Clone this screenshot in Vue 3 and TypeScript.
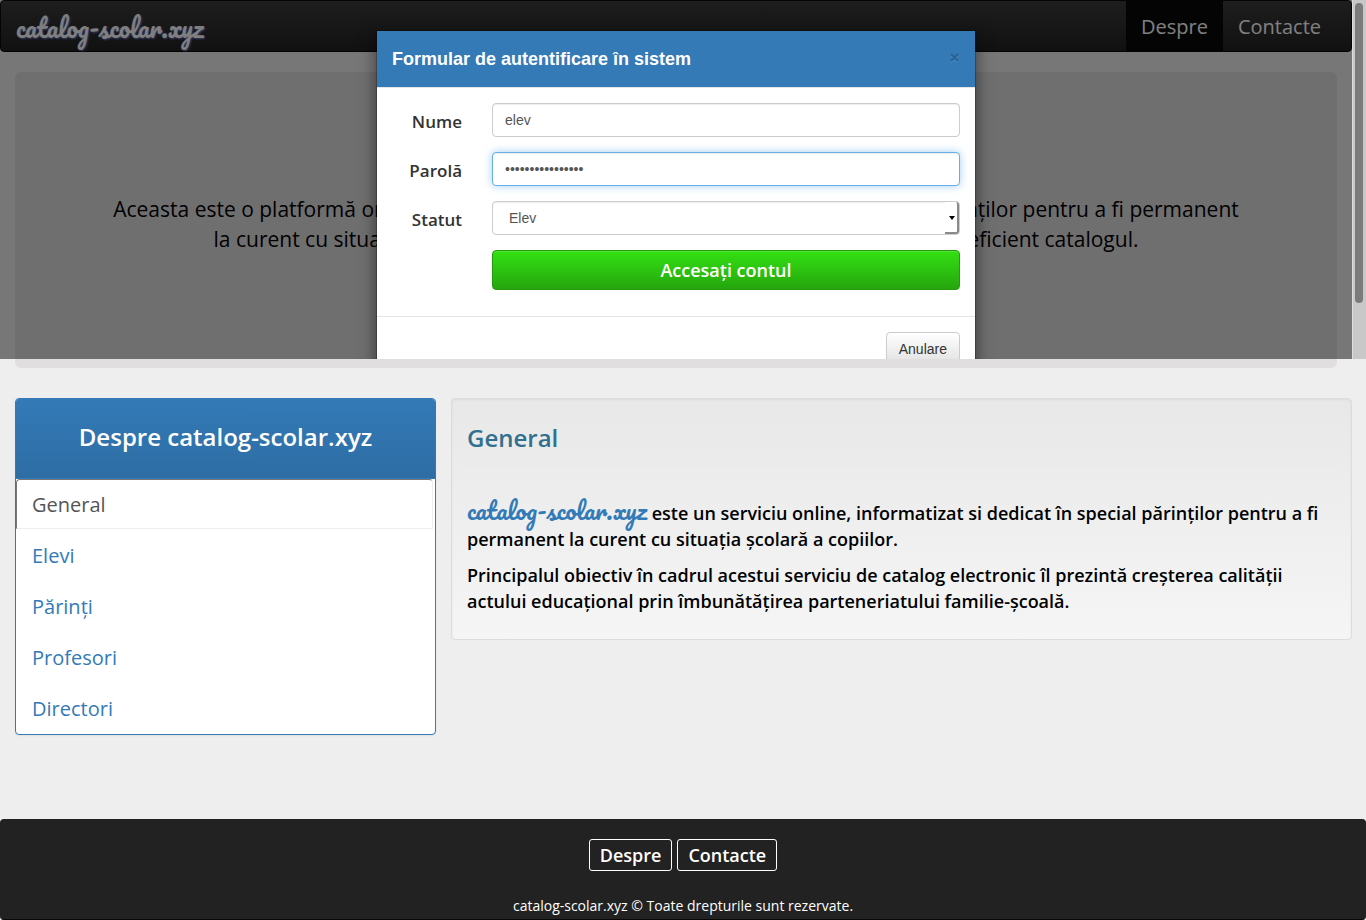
<script setup lang="ts">
import { ref } from 'vue'

interface Topic {
  label: string
  active: boolean
}

const username = ref('elev')
const password = ref('parolaelevului16')
const role = ref('Elev')
const topics: Topic[] = [
  { label: 'General', active: true },
  { label: 'Elevi', active: false },
  { label: 'Părinți', active: false },
  { label: 'Profesori', active: false },
  { label: 'Directori', active: false },
]
</script>

<template>
  <div class="page">
    <div class="top">
      <header class="navbar">
        <a class="brand script" href="#">catalog-scolar.xyz</a>
        <nav class="nav">
          <a class="nav-link current" href="#despre">Despre</a>
          <a class="nav-link" href="#contacte">Contacte</a>
        </nav>
      </header>
      <section class="hero">
        <p>
          Aceasta este o platformă online care vă oferă posibilitatea profesorilor, elevilor și a părinților pentru a fi permanent<br />
          la curent cu situația școlară a elevilor, iar profesorilor de a gestiona comod și eficient catalogul.
        </p>
      </section>
    </div>

    <main class="content">
      <aside class="panel">
        <h3 class="panel-title">Despre catalog-scolar.xyz</h3>
        <nav class="topics">
          <a v-for="t in topics" :key="t.label" href="#" class="topic" :class="{ active: t.active }">{{ t.label }}</a>
        </nav>
      </aside>
      <article class="well">
        <h3 class="well-title">General</h3>
        <hr />
        <p class="lead"><span class="script">catalog-scolar.xyz</span> este un serviciu online, informatizat si dedicat în special părinților pentru a fi permanent la curent cu situația școlară a copiilor.</p>
        <p>Principalul obiectiv în cadrul acestui serviciu de catalog electronic îl prezintă creșterea calității actului educațional prin îmbunătățirea parteneriatului familie-școală.</p>
      </article>
    </main>

    <footer class="footer">
      <div class="footer-links">
        <a href="#despre">Despre</a>
        <a href="#contacte">Contacte</a>
      </div>
      <p>catalog-scolar.xyz © Toate drepturile sunt rezervate.</p>
    </footer>

    <div class="overlay">
      <div class="backdrop">
        <div class="modal" role="dialog" aria-labelledby="login-title">
          <div class="modal-header">
            <h4 id="login-title">Formular de autentificare în sistem</h4>
            <button type="button" class="close" aria-label="Închide">
              <svg width="11" height="11" viewBox="0 0 11 11" aria-hidden="true">
                <path class="glow" d="M2 3l7 7M9 3l-7 7" />
                <path class="cross" d="M2 2l7 7M9 2l-7 7" />
              </svg>
            </button>
          </div>
          <form class="modal-body" @submit.prevent>
            <label for="nume">Nume</label>
            <input id="nume" v-model="username" class="field" type="text" />
            <label for="parola">Parolă</label>
            <input id="parola" v-model="password" class="field focused" type="password" />
            <label for="statut">Statut</label>
            <div class="select-wrap">
              <select id="statut" v-model="role" class="field">
                <option>Elev</option>
                <option>Părinte</option>
                <option>Profesor</option>
                <option>Director</option>
              </select>
              <span class="select-arrow">
                <svg width="6" height="4" viewBox="0 0 6 4" aria-hidden="true"><path d="M0 0h6L3 4z" /></svg>
              </span>
            </div>
            <button type="submit" class="submit">Accesați contul</button>
          </form>
          <div class="modal-footer">
            <button type="button" class="cancel">Anulare</button>
          </div>
        </div>
      </div>
      <div class="scrollbar"><div class="thumb"></div></div>
    </div>
  </div>
</template>

<style>
body {
  background: #eee;
}
</style>

<style scoped>
* {
  box-sizing: border-box;
}
.page {
  position: relative;
  min-height: 100vh;
  display: flex;
  flex-direction: column;
  font-family: "Open Sans", "Noto Sans", sans-serif;
  color: #000;
}
h3, h4, p {
  margin: 0;
}
a {
  text-decoration: none;
}
.script {
  font-family: Pacifico, cursive;
}
.top {
  padding-right: 14px;
}
.navbar {
  display: flex;
  justify-content: space-between;
  height: 52px;
  padding: 0 15px;
  border: 1px solid #080808;
  border-radius: 4px;
  background: linear-gradient(#3c3c3c, #222);
}
.brand {
  font-size: 25px;
  line-height: 52px;
  color: #fff;
  text-shadow: 1px 1px 2px #6c78c8;
}
.nav {
  display: flex;
}
.nav-link {
  height: 50px;
  padding: 0 15px;
  font-size: 20px;
  line-height: 52px;
  color: #fff;
}
.nav-link.current {
  background: #080808;
}
.hero {
  margin: 20px 15px 30px;
  height: 296px;
  padding: 122px 15px 0;
  border-radius: 6px;
  background: #e1dedf;
  text-align: center;
  font-size: 21px;
  line-height: 30px;
}
.content {
  display: grid;
  grid-template-columns: 421fr 901fr;
  align-items: start;
  gap: 15px;
  padding: 0 14px 0 15px;
}
.panel {
  border: 1px solid #337ab7;
  border-radius: 4px;
  background: #fff;
  box-shadow: 0 1px 2px rgba(0, 0, 0, 0.05);
  overflow: hidden;
}
.panel-title {
  height: 80px;
  background: linear-gradient(#337ab7, #2e6da4);
  border-bottom: 1px solid #337ab7;
  color: #fff;
  font-size: 24px;
  font-weight: 600;
  line-height: 76px;
  text-align: center;
}
.topics {
  display: flex;
  flex-direction: column;
  gap: 2px;
  padding-right: 2px;
}
.topic {
  height: 49px;
  padding: 0 16px;
  font-size: 20px;
  line-height: 51px;
  color: #337ab7;
}
.topic:last-child {
  height: 51px;
}
.topic.active {
  height: 50px;
  margin-bottom: -1px;
  padding: 0 15px;
  border: 1px solid #eee;
  border-top-color: #777;
  border-left-color: #777;
  border-radius: 4px 4px 0 0;
  line-height: 50px;
  color: #555;
}
.well {
  padding: 15px;
  border: 1px solid #dcdcdc;
  border-radius: 4px;
  background: linear-gradient(#e8e8e8, #f5f5f5);
  box-shadow: inset 0 1px 3px rgba(0, 0, 0, 0.05);
}
.well-title {
  padding-top: 6px;
  color: #31708f;
  font-size: 24px;
  font-weight: 600;
  line-height: 36px;
}
.well hr {
  margin: 14px 0 20px;
  border: 0;
  border-top: 1px solid #eee;
}
.well p {
  margin-bottom: 10px;
  font-size: 18px;
  font-weight: 600;
  line-height: 26px;
}
.well .lead {
  padding-top: 6px;
}
.lead .script {
  font-size: 24px;
  line-height: 26px;
  color: #337ab7;
}
.footer {
  margin-top: auto;
  padding: 19px 0 1px;
  border: 1px solid #222;
  border-bottom-color: #080808;
  border-radius: 4px;
  background: #222;
  color: #fff;
  text-align: center;
  font-size: 14px;
  line-height: 20px;
}
.footer-links {
  display: flex;
  justify-content: center;
  gap: 5px;
  margin-bottom: 25px;
}
.footer-links a {
  padding: 0 10px;
  border: 1px solid #fff;
  border-radius: 3px;
  color: #fff;
  font-size: 18px;
  font-weight: 600;
  line-height: 30px;
}
.footer p {
  padding-bottom: 2px;
}
.overlay {
  position: absolute;
  inset: 0 0 auto 0;
  height: 359px;
  display: flex;
}
.backdrop {
  flex: 1;
  padding-top: 30px;
  background: rgba(0, 0, 0, 0.5);
  overflow: hidden;
}
.scrollbar {
  width: 14px;
  padding: 3px 2px;
  border-left: 1px solid #ddd;
  background: #c8c8c8;
}
.thumb {
  width: 8px;
  height: 300px;
  border-radius: 4px;
  background: #7b7b7b;
}
.modal {
  width: 600px;
  margin: 0 auto;
  border: 1px solid rgba(0, 0, 0, 0.2);
  background: #fff;
  background-clip: padding-box;
  box-shadow: 0 5px 15px rgba(0, 0, 0, 0.5);
  font-family: "Liberation Sans", Arial, sans-serif;
}
.modal-header {
  display: flex;
  justify-content: space-between;
  align-items: center;
  height: 57px;
  padding: 0 15px;
  border-bottom: 1px solid #e5e5e5;
  background: #337ab7;
  background-clip: padding-box;
  color: #fff;
}
.modal-header h4 {
  font-size: 18px;
  font-weight: 700;
  line-height: 26px;
}
.close {
  display: flex;
  margin-bottom: 4px;
  padding: 0;
  border: 0;
  background: none;
}
.close path {
  fill: none;
  stroke-width: 2;
}
.close .glow {
  stroke: #4d8dc4;
}
.close .cross {
  stroke: #296292;
}
.modal-body {
  display: grid;
  grid-template-columns: 70px 1fr;
  gap: 15px 30px;
  padding: 15px 15px 26px;
}
.modal-body label {
  padding-top: 7px;
  font-family: "Open Sans", "Noto Sans", sans-serif;
  font-size: 17px;
  font-weight: 600;
  line-height: 24px;
  text-align: right;
  color: #333;
}
.field {
  width: 100%;
  height: 34px;
  padding: 6px 12px;
  border: 1px solid #ccc;
  border-radius: 4px;
  background: #fff;
  box-shadow: inset 0 1px 1px rgba(0, 0, 0, 0.075);
  color: #555;
  font-family: inherit;
  font-size: 14px;
  line-height: 20px;
  outline: 0;
}
.field.focused {
  border-color: #66afe9;
  box-shadow: inset 0 1px 1px rgba(0, 0, 0, 0.075), 0 0 8px rgba(102, 175, 233, 0.6);
}
.select-wrap {
  position: relative;
}
select.field {
  display: block;
  padding: 6px 16px;
  appearance: none;
}
.select-arrow {
  position: absolute;
  top: 1px;
  right: 1px;
  bottom: 1px;
  width: 14px;
  display: flex;
  align-items: center;
  justify-content: flex-end;
  padding: 2px 2px 0 0;
  border-right: 2px solid #8a8a8a;
  border-bottom: 2px solid #8a8a8a;
  border-radius: 0 3px 3px 0;
  background: #fff;
  pointer-events: none;
}
.submit {
  grid-column: 2;
  height: 40px;
  border: 1px solid #259a0e;
  border-radius: 4px;
  background: linear-gradient(#33e012, #25a60d);
  box-shadow: inset 0 1px 0 rgba(255, 255, 255, 0.15);
  color: #fff;
  font-family: "Open Sans", "Noto Sans", sans-serif;
  font-size: 18px;
  font-weight: 600;
}
.modal-footer {
  display: flex;
  justify-content: flex-end;
  padding: 15px;
  border-top: 1px solid #e5e5e5;
}
.cancel {
  height: 34px;
  padding: 0 12px;
  border: 1px solid #ccc;
  border-radius: 4px;
  background: linear-gradient(#fff, #e0e0e0);
  color: #333;
  font-family: inherit;
  font-size: 14px;
}
</style>
